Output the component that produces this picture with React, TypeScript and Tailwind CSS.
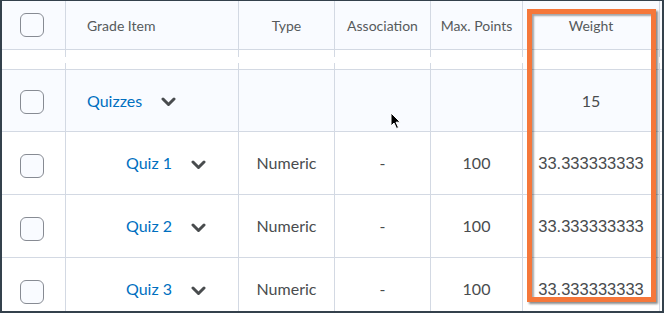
import React from "react"

const cols = "grid grid-cols-[64px_173px_96px_96px_92px_1fr]"
const line = "border-[#d3d9e3]"

function Checkbox({ className = "" }: { className?: string }) {
  return (
    <div
      className={`h-6 w-6 rounded-[6px] border-[1.5px] border-[#878b93] bg-[#f9fbff] ${className}`}
    />
  )
}

function Chevron() {
  return (
    <svg width="15" height="10" viewBox="0 0 15 10" className="shrink-0">
      <path d="M2 2 L7.5 7.5 L13 2" fill="none" stroke="#494c4e" strokeWidth="3" strokeLinecap="round" strokeLinejoin="round" />
    </svg>
  )
}

const quizzes = ["Quiz 1", "Quiz 2", "Quiz 3"]

export default function App() {
  return (
    <div className="relative h-[313px] w-[664px] overflow-hidden border-t border-l-2 border-r-2 border-b-2 border-[#34414c] bg-white font-['Lato',sans-serif] text-[#494c4e]">
      {/* header */}
      <div className={`${cols} h-[49px] border-b ${line} bg-[#f9fbff] text-[14px] text-[#565a5c]`}>
        <div className={`flex items-center justify-center border-r ${line}`}>
          <Checkbox className="-ml-1" />
        </div>
        <div className={`flex items-center border-r ${line} pl-[21px]`}>Grade Item</div>
        <div className={`flex items-center justify-center border-r ${line}`}>Type</div>
        <div className={`flex items-center justify-center border-r ${line}`}>Association</div>
        <div className={`flex items-center justify-center border-r ${line}`}>Max. Points</div>
        <div className={`flex items-center justify-center border-r ${line} mr-[2px]`}>Weight</div>
      </div>

      {/* spacer */}
      <div className={`${cols} h-[7px]`}>
        <div className={`border-r ${line}`} />
        <div className={`border-r ${line}`} />
        <div className={`border-r ${line}`} />
        <div className={`border-r ${line}`} />
        <div className={`border-r ${line}`} />
        <div className={`border-r ${line} mr-[2px]`} />
      </div>
      <div className="h-[6px]" />
      <div className={`${cols} h-[6px]`}>
        <div className={`border-r ${line}`} />
        <div className={`border-r ${line}`} />
        <div className={`border-r ${line}`} />
        <div className={`border-r ${line}`} />
        <div className={`border-r ${line}`} />
        <div className={`border-r ${line} mr-[2px]`} />
      </div>

      {/* category row */}
      <div className={`${cols} h-[63px] border-y ${line} bg-[#f9fbff] text-[16px]`}>
        <div className={`flex items-center justify-center border-r ${line}`}>
          <Checkbox className="-ml-1 mt-[3px]" />
        </div>
        <div className={`flex items-center gap-[19px] border-r ${line} pl-[21px]`}>
          <span className="text-[#006fbf]">Quizzes</span>
          <span className="mt-[3px]">
            <Chevron />
          </span>
        </div>
        <div className={`border-r ${line}`} />
        <div className={`border-r ${line}`} />
        <div className={`border-r ${line}`} />
        <div className={`flex items-center justify-center border-r ${line} mr-[2px]`}>15</div>
      </div>

      {quizzes.map((q) => (
        <div key={q} className={`${cols} h-[63px] border-b ${line} text-[16px]`}>
          <div className={`flex items-center justify-center border-r ${line}`}>
            <Checkbox className="-ml-1 mt-[5px]" />
          </div>
          <div className={`flex items-center gap-[19px] border-r ${line} pl-[60px]`}>
            <span className="text-[#006fbf]">{q}</span>
            <span className="mt-[3px]">
              <Chevron />
            </span>
          </div>
          <div className={`flex items-center justify-center border-r ${line}`}>Numeric</div>
          <div className={`flex items-center justify-center border-r ${line}`}>-</div>
          <div className={`flex items-center justify-center border-r ${line}`}>100</div>
          <div className={`flex items-center justify-center border-r ${line} mr-[2px] font-['Liberation_Sans',Arial,sans-serif] text-[16.5px]`}>
            33.333333333
          </div>
        </div>
      ))}

      {/* highlight annotation */}
      <div className="absolute left-[525px] top-[8px] h-[293px] w-[129px] border-[5px] border-[#f5773a] shadow-[2px_2px_2px_rgba(0,0,0,0.45),inset_2px_2px_2px_rgba(0,0,0,0.35)]" />

      {/* mouse cursor */}
      <svg className="absolute left-[388px] top-[111px]" width="12" height="18" viewBox="0 0 12 18">
        <path d="M1 1 L1 14 L4 11 L6.5 16.5 L8.5 15.5 L6 10.2 L10.2 10.2 Z" fill="#000" stroke="#fff" strokeWidth="1" />
      </svg>
    </div>
  )
}
